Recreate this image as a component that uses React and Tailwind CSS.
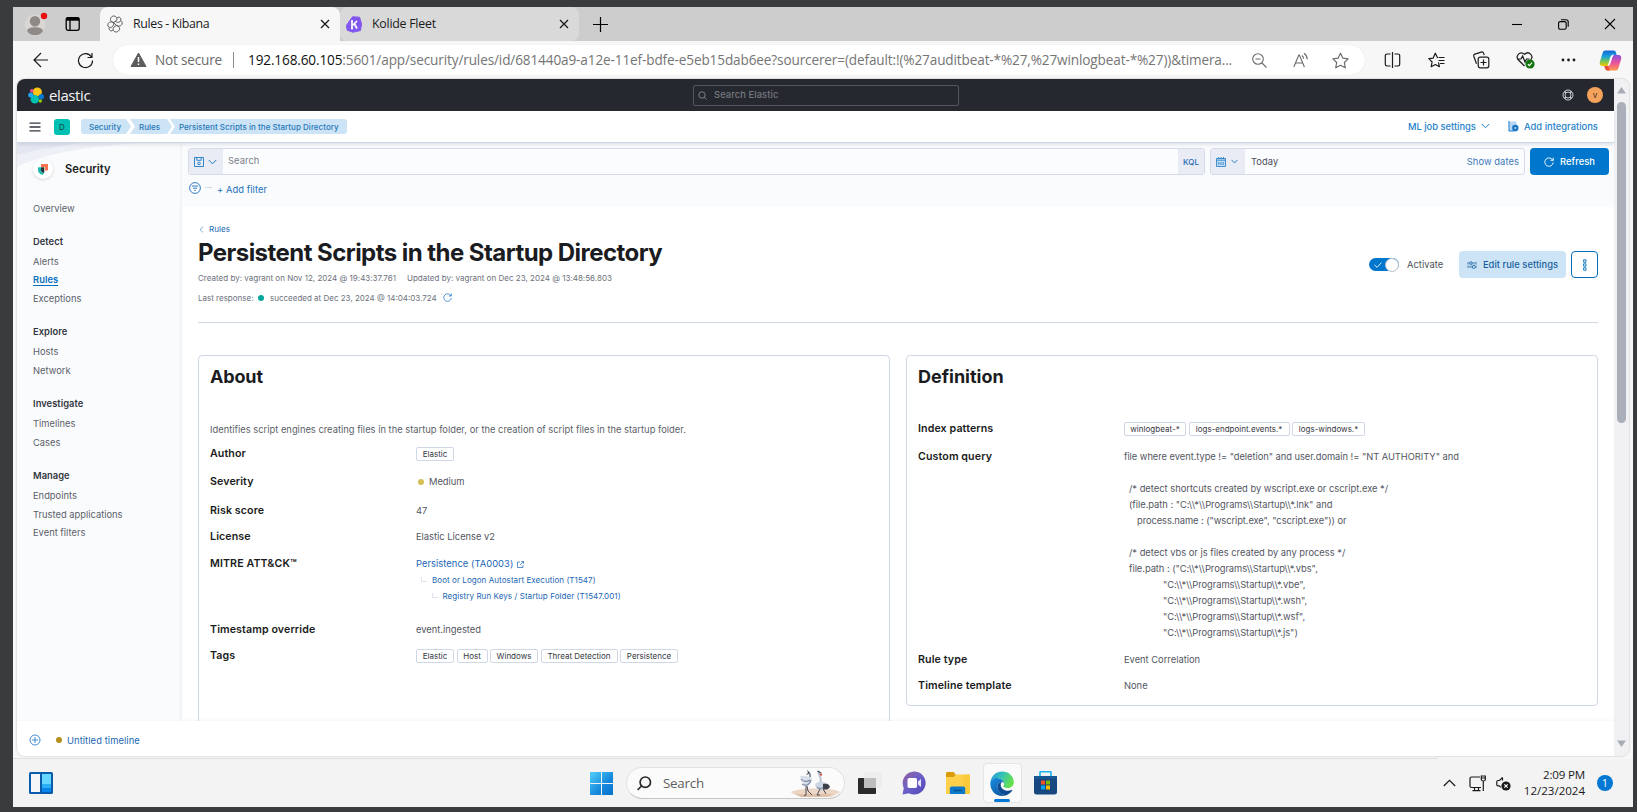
import React from "react";

const ui = "font-['Inter',sans-serif]";
const segoe = "font-['Open_Sans','Noto_Sans',sans-serif]";

function Svg({ w, h, vb, className = "", children, sw = 1 }) {
  return (
    <svg width={w} height={h} viewBox={vb || `0 0 ${w} ${h}`} fill="none" stroke="currentColor" strokeWidth={sw} className={"block shrink-0 " + className}>
      {children}
    </svg>
  );
}

/* ---------- browser chrome ---------- */

function CloseX() {
  return (
    <Svg w={10} h={10} sw={1.3} className="text-[#1a1a1a]">
      <path d="M1 1 9 9M9 1 1 9" />
    </Svg>
  );
}

function TabStrip() {
  return (
    <div className="flex h-[34px] shrink-0 bg-[#cdcdcd]">
      <div className="flex w-[87px] items-center pl-[11px]">
        <svg width="24" height="26" viewBox="0 0 24 26" className="block">
          <circle cx="11" cy="13.5" r="10.3" fill="#d9d6d3" />
          <circle cx="11" cy="10.2" r="5.2" fill="#8f8a87" />
          <path d="M3.200 20.200c0-3 3-4 7.800-4s7.800 1 7.800 4c-1.800 2.600-4.400 3.900-7.800 3.900s-6-1.300-7.800-3.900z" fill="#8f8a87" />
          <circle cx="20" cy="5" r="3.200" fill="#e81010" />
        </svg>
        <Svg w={16} h={16} sw={1.3} className="ml-[17px] text-black">
          <rect x="1.200" y="1.700" width="13" height="12.600" rx="2" />
          <path d="M1.200 3.200h13" strokeWidth="3" />
          <path d="M5 4v10" />
        </Svg>
      </div>
      <div className="flex w-[240px] items-center rounded-t-lg bg-[#f7f7f7] pl-[7px] pr-[10.5px]">
        <Svg w={16} h={18} vb="0 0 16 18" sw={1} className="text-[#555]">
          <path d="M6.300 7.500C3.500 6.500 2.800 4.500 4 2.600 5.500.3 9 .5 9.900 3.200 10.300 5 9 6.500 6.300 7.500z" />
          <path d="M9.900 3.200C11.500 1 14.300 2.500 13.800 5.200 13.300 7.300 10.500 8.200 8.600 6.300" />
          <path d="M6.300 7.500C4 6 .8 7.500.8 10c0 2.800 3.700 3.300 5 1.200C6.800 9.800 7 8.700 6.300 7.500z" />
          <path d="M9.700 10.500c2.800 1 3.500 3 2.300 4.900-1.500 2.300-5 2.100-5.900-.6-.4-1.800.9-3.300 3.600-4.300z" />
          <path d="M6.100 14.800c-1.600 2.200-4.400.7-3.900-2" />
          <path d="M9.700 10.500C12 12 15.200 10.500 15.200 8c0-1.200-.7-2-1.700-2.400M9.700 10.500 6.300 7.500" />
        </Svg>
        <span className="ml-[10px] flex-1 text-[12.4px] tracking-[-0.36px] text-[#1b1b1b]">Rules - Kibana</span>
        <CloseX />
      </div>
      <div className="flex w-[239px] items-center rounded-lg bg-[#d9d9d9] pl-[6px] pr-[10.5px]">
        <svg width="16" height="17" viewBox="0 0 16 17" className="block">
          <path d="M6.500 0.800 13.500 1.200 15.600 8 14.400 14.600 7 16.200 1.200 14.200 0.400 9.500z" fill="#8257ec" stroke="#8257ec" strokeLinejoin="round" />
          <path d="M6 5v7.600M5 5h2M5 12.500h2M11 5 7 9M8.500 8 11 12.500" stroke="#fff" strokeWidth="1.700" fill="none" />
        </svg>
        <span className="ml-[10px] flex-1 text-[12.4px] tracking-[-0.26px] text-[#1b1b1b]">Kolide Fleet</span>
        <CloseX />
      </div>
      <div className="flex flex-1 items-center pl-[14px]">
        <Svg w={15} h={15} sw={1.2} className="text-black">
          <path d="M7.500 0v15M0 7.500h15" />
        </Svg>
        <div className="ml-auto flex items-center text-black">
          <Svg w={10} h={10} sw={1.1}><path d="M0 5.500h10" /></Svg>
          <Svg w={11} h={11} sw={1.1} className="ml-9">
            <rect x="0.600" y="2.600" width="7.600" height="7.600" rx="1.500" />
            <path d="M3 .7h5c1.200 0 2.200.8 2.200 2v5" />
          </Svg>
          <Svg w={12} h={12} sw={1.1} className="ml-[35px] mr-[17px]"><path d="M1 1 11 11M11 1 1 11" /></Svg>
        </div>
      </div>
    </div>
  );
}

const star = "M8 1.200 10.200 5.700 15.200 6.400 11.600 9.900 12.500 14.900 8 12.500 3.500 14.900 4.400 9.900.8 6.400 5.800 5.700z";

function Toolbar() {
  return (
    <div className="flex h-[38px] shrink-0 items-center bg-[#f7f7f7] pl-5">
      <Svg w={16} h={16} sw={1.2} className="text-[#1b1b1b]"><path d="M15 8H1M8 1 1 8l7 7" /></Svg>
      <Svg w={17} h={17} sw={1.2} className="ml-7 text-[#1b1b1b]">
        <path d="M14.500 5A7 7 0 1 0 15.500 8.500M15 1v4.500h-4.500" />
      </Svg>
      <div className="ml-[19px] flex h-[30px] w-[1252px] items-center rounded-full bg-white pl-[17px] text-[#6b6b6b] shadow-[0_0_1px_rgba(0,0,0,0.15)]">
        <svg width="17" height="16" viewBox="0 0 17 16" className="block">
          <path d="M8.500 1 16 14.500H1z" fill="#5c5c5c" stroke="#5c5c5c" strokeLinejoin="round" />
          <path d="M8.500 5v5M8.500 11.500v1.600" stroke="#fff" strokeWidth="1.500" />
        </svg>
        <span className="ml-[8px] w-[66px] whitespace-nowrap text-[13.6px] tracking-[-0.2px]">Not secure</span>
        <div className="ml-[12px] h-4 w-px bg-[#8c8c8c]" />
        <span className="ml-[14px] w-[984px] whitespace-nowrap text-[13.6px] tracking-[-0.133px] text-[#757575]">
          <span className="text-[#111]">192.168.60.105</span>:5601/app/security/rules/id/681440a9-a12e-11ef-bdfe-e5eb15dab6ee?sourcerer=(default:!(%27auditbeat-*%27,%27winlogbeat-*%27))&amp;timera...
        </span>
        <Svg w={15} h={15} sw={1.1} className="ml-[20px]"><circle cx="6" cy="6" r="5.300" /><path d="M10 10l4.500 4.500M3.500 6h5" /></Svg>
        <Svg w={16} h={16} sw={1.1} className="ml-[26px]">
          <path d="M.8 15 5.800 3h.6l5 12M2.600 11h7" />
          <path d="M9 3.500c1 .8 1.500 2 1.500 3.300M11 1.200c2 1.400 3.200 3.500 3.200 6" />
        </Svg>
        <Svg w={17} h={17} vb="0 0 16 16" sw={1.1} className="ml-[23px]"><path d={star} strokeLinejoin="round" /></Svg>
      </div>
      <div className="flex items-center pl-[19px] text-[#1b1b1b]">
        <Svg w={17} h={16} sw={1.2}><path d="M6.500 2H3a1.700 1.700 0 0 0-1.700 1.700v8.600A1.700 1.700 0 0 0 3 14h3.500M10.500 2H14a1.700 1.700 0 0 1 1.700 1.700v8.600A1.700 1.700 0 0 1 14 14h-3.500M8.500 0v16" /></Svg>
        <Svg w={17} h={16} sw={1.2} className="ml-[27px]">
          <path d="M10.500 10.300l.9 4.400-4-2.200-4.200 2.200.9-4.700L.8 6.700l4.400-.6L7.300 1.200 9.700 6" strokeLinejoin="round" />
          <path d="M10.500 5.500h6M10.500 8.500h6M12 11.500h4.500" />
        </Svg>
        <Svg w={18} h={18} sw={1.2} className="ml-[27px]">
          <rect x="6.200" y="6.200" width="10.600" height="10.600" rx="2" />
          <path d="M11.500 8.500v6M8.500 11.500h6M4.500 12.800 1.800 5.200c-.3-1 .2-1.800 1-2.100l6.500-2c1-.3 1.900.1 2.200 1l.8 2" />
        </Svg>
        <svg width="19" height="18" viewBox="0 0 19 18" fill="none" className="ml-[26px] block">
          <path d="M8.500 15 2.200 8.800C-.8 5 4 -.8 8.500 3.300 13 -.8 18 5 14.800 8.800M1 8h4l1.600-3 2.400 6 1.500-3h3" stroke="#1b1b1b" strokeWidth="1.200" />
          <circle cx="14" cy="13" r="4.600" fill="#13740e" />
          <path d="M11.800 13.200l1.500 1.500 2.800-3" stroke="#fff" strokeWidth="1.100" />
        </svg>
        <svg width="15" height="4" viewBox="0 0 15 4" className="ml-[26px] block" fill="#1b1b1b"><circle cx="2" cy="2" r="1.400" /><circle cx="7.500" cy="2" r="1.400" /><circle cx="13" cy="2" r="1.400" /></svg>
        <svg width="23" height="21" viewBox="0 0 23 21" className="ml-[23px] block">
          <defs>
            <linearGradient id="cpA" x1="0" y1="0" x2="0" y2="1"><stop offset="0" stopColor="#1566d6" /><stop offset=".4" stopColor="#19a5d8" /><stop offset=".7" stopColor="#7bc553" /><stop offset="1" stopColor="#f5c700" /></linearGradient>
            <linearGradient id="cpB" x1="0" y1="0" x2="0" y2="1"><stop offset="0" stopColor="#8b50e0" /><stop offset=".5" stopColor="#e9529c" /><stop offset="1" stopColor="#ff9a4a" /></linearGradient>
          </defs>
          <path d="M6.500.5h8c1.500 0 2 .8 2.500 2l.7 2.500h-3c-1.500 0-2.200 1-2.700 2.500L10 14c-.5 1.500-1.200 2-2.800 2H3.500C1 16 .3 13.800 1 11.500L3.600 3C4 1.300 5 .5 6.500.5z" fill="url(#cpA)" />
          <path d="M16.500 20.500h-8c-1.500 0-2-.8-2.500-2L5.300 16h3c1.500 0 2.200-1 2.700-2.500L13 7c.5-1.500 1.200-2 2.800-2h3.700c2.500 0 3.200 2.200 2.500 4.500L19.400 18c-.4 1.700-1.400 2.500-2.900 2.500z" fill="url(#cpB)" />
          <path d="M9.200 15.500c1-.3 1.500-1.200 1.800-2.300L13 7c.3-1 .6-1.600 1.300-1.900-1.600 0-2.200 1-2.600 2.400L9.900 13.800z" fill="#fff" stroke="#fff" strokeWidth="1" />
          <path d="M6 17.800 5.300 16h4l1.500 4.500H8.500c-1.500 0-2-1.200-2.500-2.700z" fill="#ee4a3c" />
        </svg>
      </div>
    </div>
  );
}

/* ---------- kibana header ---------- */

function ElasticHeader() {
  return (
    <div className="flex h-8 shrink-0 items-center bg-[#25282f]">
      <svg width="16" height="17" viewBox="0 0 16 17" className="ml-[11px] block">
        <circle cx="9.300" cy="5" r="4.600" fill="#fec514" />
        <circle cx="6.800" cy="12.300" r="4.300" fill="#00bfb3" />
        <circle cx="13.300" cy="9.800" r="2.700" fill="#0077cc" />
        <circle cx="2.700" cy="8" r="2.500" fill="#1ba9f5" />
        <circle cx="3.800" cy="3.700" r="1.800" fill="#f04e98" />
        <circle cx="12.300" cy="14" r="1.700" fill="#93c90e" />
      </svg>
      <span className="ml-[5px] mt-[-1px] w-[44px] font-['Open_Sans',sans-serif] text-[15px] font-normal leading-5 tracking-[-0.4px] text-[#f4f5f7]">elastic</span>
      <div className="ml-[600px] flex h-[21px] w-[266px] items-center rounded-[2px] border border-[#55585e] pl-1 text-[#868a91]">
        <Svg w={9} h={9} sw={0.9}><circle cx="4" cy="4" r="3.200" /><path d="M6.300 6.300 8.600 8.600" /></Svg>
        <span className="ml-[7px] text-[9.33px] font-medium tracking-[0.1px] text-[#75787f]">Search Elastic</span>
      </div>
      <Svg w={12} h={12} sw={1} className="ml-[603px] text-[#c9ccd3]">
        <circle cx="6" cy="6" r="5" /><circle cx="6" cy="6" r="3" />
        <path d="M2.500 2.500 4 4M9.500 2.500 8 4M2.500 9.500 4 8M9.500 9.500 8 8" strokeWidth="1.600" />
      </Svg>
      <div className="ml-[13px] flex h-4 w-4 items-center justify-center rounded-full bg-[#f5a35c] text-[8px] text-[#3a2c20]">v</div>
    </div>
  );
}

function Crumb({ children, first, last, w }) {
  const clip = first
    ? "[clip-path:polygon(0_0,calc(100%-5px)_0,100%_50%,calc(100%-5px)_100%,0_100%)] rounded-l-[3px]"
    : last
    ? "[clip-path:polygon(0_0,100%_0,100%_100%,0_100%,5px_50%)] rounded-r-[3px]"
    : "[clip-path:polygon(0_0,calc(100%-5px)_0,100%_50%,calc(100%-5px)_100%,0_100%,5px_50%)]";
  return <div className={`flex h-[15px] items-center whitespace-nowrap bg-[#cce4f5] text-[8px] font-medium text-[#2877b8] ${w} ${clip}`}>{children}</div>;
}

function SubHeader() {
  return (
    <div className="relative z-10 flex h-8 shrink-0 items-center border-b border-[#cfd6e3] bg-white shadow-[0_2px_3px_rgba(110,125,155,0.18)]">
      <Svg w={12} h={10} sw={1.3} className="ml-3 text-[#343741]"><path d="M.5 1.200h11M.5 5h11M.5 8.800h11" /></Svg>
      <div className="ml-[13px] flex h-4 w-4 items-center justify-center rounded-[3px] bg-[#00bfb3] text-[8px] text-[#12443f]">D</div>
      <div className="ml-[11px] flex">
        <Crumb first w="w-[50px] pl-[8px]">Security</Crumb>
        <Crumb w="-ml-px w-[42px] pl-[9px]">Rules</Crumb>
        <Crumb last w="-ml-[2px] w-[177px] pl-[9px] tracking-[0.025px]">Persistent Scripts in the Startup Directory</Crumb>
      </div>
      <div className="ml-auto flex items-center pr-4 text-[9.33px] font-medium text-[#2581ca]">
        <span className="w-[67px] whitespace-nowrap pt-px">ML job settings</span>
        <Svg w={9} h={6} sw={1} className="ml-[6px]"><path d="M.8 1 4.500 4.800 8.200 1" /></Svg>
        <svg width="11" height="11" viewBox="0 0 11 11" className="ml-[18px] block">
          <rect x="0.500" y="0.500" width="8" height="10" fill="#b7d7f0" />
          <path d="M1 0v10h5" stroke="#2f86cf" fill="none" />
          <circle cx="7.300" cy="7" r="3.200" fill="#1a76c4" /><circle cx="7.300" cy="7" r="1" fill="#b7d7f0" />
        </svg>
        <span className="ml-[5px] w-[74px] whitespace-nowrap pt-px tracking-[0.02px]">Add integrations</span>
      </div>
    </div>
  );
}

/* ---------- sidebar ---------- */

const groups = [
  { title: "Detect", items: ["Alerts", "Rules", "Exceptions"] },
  { title: "Explore", items: ["Hosts", "Network"] },
  { title: "Investigate", items: ["Timelines", "Cases"] },
  { title: "Manage", items: ["Endpoints", "Trusted applications", "Event filters"] },
];

function Sidebar() {
  return (
    <div className="relative w-[165px] shrink-0 bg-[#fafbfd] pl-4 text-[9.33px] text-[#5b5f69] shadow-[inset_-2px_0_2px_rgba(0,0,0,0.035)]">
      <svg width="120" height="26" viewBox="0 0 120 26" className="absolute left-0 top-0">
        <path d="M0 0h120C80 3 30 9 0 24z" fill="#eef0f7" />
        <path d="M0 0h62C40 4 18 7 0 12z" fill="#e4e7f1" />
      </svg>
      <div className="relative flex h-[52px] items-center">
        <div className="flex h-5 w-5 items-center justify-center rounded-full bg-white shadow-[0_1px_3px_rgba(0,0,0,0.15)]">
          <svg width="10" height="11" viewBox="0 0 10 11" className="block">
            <path d="M3 0h7v6.500H7V3H3z" fill="#fa744e" />
            <path d="M0 3.200h3v4.500L6 9.500 4.500 11C1 9.600 0 8 0 6z" fill="#1dbab0" />
            <path d="M3 3.200h3.300V8.500L5.500 9C4 8.500 3 7.500 3 6.500z" fill="#263238" />
          </svg>
        </div>
        <span className="ml-3 mt-px text-[11.2px] font-semibold text-[#1a1c21]">Security</span>
      </div>
      <div className="flex h-[25px] items-center pt-[2px]">Overview</div>
      <div className="mt-3 flex flex-col gap-[14.4px]">
        {groups.map((g) => (
          <div key={g.title}>
            <div className="flex h-5 items-center font-semibold tracking-[0.05px] text-[#343741]">{g.title}</div>
            {g.items.map((i) => (
              <div key={i} className={i === "Rules" ? "flex h-[18.7px] items-center font-semibold tracking-[0.05px] text-[#0b6fc0] underline underline-offset-[1.5px]" : "flex h-[18.7px] items-center pt-px tracking-[0.01px]"}>{i}</div>
            ))}
          </div>
        ))}
      </div>
    </div>
  );
}

/* ---------- main ---------- */

function Chev() {
  return <Svg w={9} h={6} sw={1}><path d="M.8 1 4.500 4.800 8.200 1" /></Svg>;
}

function Reload({ s = 10 }) {
  return <Svg w={s} h={s} vb="0 0 10 10" sw={0.9}><path d="M8.900 3.500A4.200 4.200 0 1 0 9.200 5.400M6.500 3.300h2.800V.6" /></Svg>;
}

function QueryBar() {
  return (
    <div className="h-16 shrink-0 bg-[#fafbfd] pl-[6px] pr-[5px] pt-[5px]">
      <div className="flex h-[27px] text-[9.33px]">
        <div className="flex w-[1017px] rounded-[3px] border border-[#d3dae9] bg-[#fbfcfe]">
          <div className="flex w-[34px] items-center gap-1 bg-[#e9ecf4] pl-[5px] text-[#1f7ac6]">
            <Svg w={10} h={10} sw={0.9}><path d="M.5.500h9v9h-9zM2.800.500v2.800h4.400V.500" /><circle cx="5" cy="6.400" r="1.300" /></Svg>
            <Chev />
          </div>
          <span className="flex-1 pl-[5px] leading-[24px] tracking-[0.08px] text-[#7b7f89]">Search</span>
          <div className="flex w-[26px] items-center justify-center bg-[#e9ecf4] text-[8px] font-medium text-[#1f6ab5]">KQL</div>
        </div>
        <div className="ml-[5px] flex w-[315px] rounded-[3px] border border-[#d3dae9] bg-[#fbfcfe]">
          <div className="flex w-[34px] items-center gap-[5px] bg-[#e9ecf4] pl-[5px] text-[#1f7ac6]">
            <Svg w={10} h={10} sw={0.8}><path d="M.5 1.500h9v8h-9z" fill="#c3ddf2" /><path d="M.5 3.200h9M2.500 0v2M5 0v2M7.500 0v2M2.800 5v3M5 5v3M7.200 5v3" /></Svg>
            <Svg w={7} h={5} sw={0.9}><path d="M.5.800 3.500 4 6.500.800" /></Svg>
          </div>
          <span className="flex-1 pl-[6px] leading-[26px] text-[#4c4f58] tracking-[0.08px]">Today</span>
          <span className="pr-[5px] leading-[26px] text-[#3d78b8] tracking-[0.08px]">Show dates</span>
        </div>
        <div className="ml-[5px] flex flex-1 items-center justify-center gap-[6px] rounded-[4px] bg-[#0077cc] text-white">
          <Reload s={10} />
          <span className="font-medium tracking-[0.1px]">Refresh</span>
        </div>
      </div>
      <div className="flex h-[27px] items-center text-[#2070bb]">
        <Svg w={12} h={12} sw={0.9} className="mt-[-1px] ml-[1px]"><circle cx="6" cy="6" r="5.400" /><path d="M2.800 4h6.400M4 6.200h4M5.200 8.300h1.600" /></Svg>
        <div className="mb-[2px] ml-[4px] h-px w-[7px] bg-[#d3dae6]" />
        <span className="ml-[5px] mt-[3px] text-[9.33px] tracking-[0.07px]">+ Add filter</span>
      </div>
    </div>
  );
}

function RuleHeader() {
  return (
    <div className="flex h-[116px] justify-between border-b border-[#cfd6e4]">
      <div>
        <div className="mt-[15px] flex h-[14px] items-center text-[8px] text-[#1a66b3]">
          <Svg w={5} h={7} sw={0.9} className="ml-[1px] text-[#6aa5d8]"><path d="M4 .6 1 3.500 4 6.400" /></Svg>
          <span className="ml-[5px] tracking-[0.06px]">Rules</span>
        </div>
        <h1 className="mt-px h-[31px] whitespace-nowrap text-[24px] font-bold leading-8 tracking-[-0.55px] text-[#1a1c21]">Persistent Scripts in the Startup Directory</h1>
        <div className="mt-px flex h-[18px] items-center gap-[11px] whitespace-nowrap text-[8px] tracking-[0.015px] text-[#6d717c]">
          <span>Created by: vagrant on Nov 12, 2024 @ 19:43:37.761</span>
          <span>Updated by: vagrant on Dec 23, 2024 @ 13:48:56.803</span>
        </div>
        <div className="mt-[1px] flex h-5 items-center whitespace-nowrap text-[8px] text-[#6d717c]">
          <span>Last response:</span>
          <div className="mb-px ml-[5px] h-[6px] w-[6px] rounded-full bg-[#00a69b]" />
          <span className="ml-[5.5px]">succeeded at Dec 23, 2024 @ 14:04:03.724</span>
          <div className="mb-[2px] ml-[6px] text-[#2b82cc]"><Reload s={9} /></div>
        </div>
      </div>
      <div className="mt-[44px] flex h-[27px] items-center text-[9.33px]">
        <div className="flex h-[13px] w-[30px] items-center justify-between rounded-full bg-[#0077cc] pl-[5px] text-white">
          <Svg w={8} h={6} sw={0.9}><path d="M.5 3 3 5.300 7.500.600" /></Svg>
          <div className="h-[14px] w-[14px] rounded-full border border-[#bcc3cf] bg-white" />
        </div>
        <span className="ml-2 w-[36px] text-[#4c4f58] tracking-[0.05px]">Activate</span>
        <div className="ml-4 flex h-full w-[107px] items-center justify-center gap-[6px] rounded-[4px] bg-[#cce4f5] text-[#1a5f9f]">
          <Svg w={10} h={8} sw={0.8}><path d="M0 2h2.500M5.500 2H10M0 6h5M8.500 6H10" /><circle cx="4" cy="2" r="1.300" /><circle cx="6.800" cy="6" r="1.500" /><path d="M0 4h10" strokeWidth=".4" /></Svg>
          <span className="whitespace-nowrap font-medium tracking-[0.05px]">Edit rule settings</span>
        </div>
        <div className="ml-[5px] flex h-full w-[27px] items-center justify-center rounded-[4px] border border-[#0071c2] bg-white text-[#0071c2]">
          <Svg w={4} h={12} sw={0.9}><path d="M.6.800h2.400v2.400H.6zM.6 4.800h2.400v2.400H.6zM.6 8.800h2.400v2.400H.6z" /></Svg>
        </div>
      </div>
    </div>
  );
}

function Badge({ children, w }) {
  return <span className={`flex h-[14px] items-center justify-center whitespace-nowrap rounded-[2px] border border-[#d0d7e6] bg-white text-[8px] text-[#343741] ${w}`}>{children}</span>;
}

function Row({ h, label, children }) {
  return (
    <div className={`flex items-center ${h}`}>
      <div className="w-[206px] whitespace-nowrap text-[10.67px] font-semibold tracking-[0.1px] text-[#1a1c21]">{label}</div>
      <div className="flex items-center text-[9.33px] text-[#53565f]">{children}</div>
    </div>
  );
}

function TopRow({ h, label, children }) {
  return (
    <div className={`flex items-start ${h}`}>
      <div className="w-[206px] whitespace-nowrap text-[10.67px] font-semibold leading-4 tracking-[0.1px] text-[#1a1c21]">{label}</div>
      <div className="whitespace-pre text-[9.33px] leading-4 text-[#53565f]">{children}</div>
    </div>
  );
}

function Elbow({ className }) {
  return <div className={`mb-[2px] h-[5px] w-[6px] border-b border-l border-[#dde2ec] ${className}`} />;
}

const query = [
  ["tracking-[-0.045px]", 'file where event.type != "deletion" and user.domain != "NT AUTHORITY" and'],
  ["", " "],
  ["pl-[5px]", "/* detect shortcuts created by wscript.exe or cscript.exe */"],
  ["pl-[5px] tracking-[-0.03px]", '(file.path : "C:\\\\*\\\\Programs\\\\Startup\\\\*.lnk" and'],
  ["pl-[13px] tracking-[-0.075px]", 'process.name : ("wscript.exe", "cscript.exe")) or'],
  ["", " "],
  ["pl-[5px]", "/* detect vbs or js files created by any process */"],
  ["pl-[5px] tracking-[-0.04px]", 'file.path : ("C:\\\\*\\\\Programs\\\\Startup\\\\*.vbs",'],
  ["pl-[39px] tracking-[-0.05px]", '"C:\\\\*\\\\Programs\\\\Startup\\\\*.vbe",'],
  ["pl-[39px] tracking-[-0.05px]", '"C:\\\\*\\\\Programs\\\\Startup\\\\*.wsh",'],
  ["pl-[39px] tracking-[-0.05px]", '"C:\\\\*\\\\Programs\\\\Startup\\\\*.wsf",'],
  ["pl-[39px] tracking-[-0.05px]", '"C:\\\\*\\\\Programs\\\\Startup\\\\*.js")'],
];

function About() {
  return (
    <div className="h-[380px] w-[692px] rounded-[4px] border border-[#d0d7e6] pl-[11px]">
      <h2 className="h-[61px] pt-[9px] text-[18px] font-bold leading-6 tracking-[-0.15px] text-[#1a1c21]">About</h2>
      <div className="flex h-6 items-center whitespace-nowrap pt-px text-[9.33px] tracking-[0.01px] text-[#5b5f69]">Identifies script engines creating files in the startup folder, or the creation of script files in the startup folder.</div>
      <Row h="h-[26px]" label="Author"><Badge w="w-[38px]">Elastic</Badge></Row>
      <Row h="h-[29.6px]" label="Severity"><div className="ml-[2px] mr-[5px] h-[6px] w-[6px] rounded-full bg-[#d6bf57]" />Medium</Row>
      <Row h="h-[28px]" label="Risk score">47</Row>
      <Row h="h-[25px]" label="License">Elastic License v2</Row>
      <TopRow h="h-[67.4px] pt-[6.6px]" label="MITRE ATT&amp;CK™">
        <div className="flex h-4 items-center gap-1 tracking-[0.06px] text-[#1a66b3]">
          <span>Persistence (TA0003)</span>
          <Svg w={7} h={7} sw={0.7}><path d="M3 1H.5v5.500H6V4M4.200.500h2.300v2.300M6.500.500 3 4" /></Svg>
        </div>
        <div className="flex h-4 items-center text-[8px] tracking-[0.07px] text-[#1a66b3]"><Elbow className="ml-[5px] mr-[5px]" />Boot or Logon Autostart Execution (T1547)</div>
        <div className="flex h-4 items-center text-[8px] tracking-[0.07px] text-[#1a66b3]"><Elbow className="ml-[15.5px] mr-[5px]" />Registry Run Keys / Startup Folder (T1547.001)</div>
      </TopRow>
      <Row h="h-[27px]" label="Timestamp override">event.ingested</Row>
      <Row h="h-[25px]" label="Tags">
        <div className="flex gap-[2.5px]">
          <Badge w="w-[38px]">Elastic</Badge>
          <Badge w="w-[31px]">Host</Badge>
          <Badge w="w-[48px]">Windows</Badge>
          <Badge w="w-[77px]">Threat Detection</Badge>
          <Badge w="w-[58px]">Persistence</Badge>
        </div>
      </Row>
    </div>
  );
}

function Definition() {
  return (
    <div className="h-[351px] w-[692px] rounded-[4px] border border-[#d0d7e6] pl-[11px]">
      <h2 className="h-[60.4px] pt-[9px] text-[18px] font-bold leading-6 tracking-[0px] text-[#1a1c21]">Definition</h2>
      <Row h="h-[26px]" label="Index patterns">
        <div className="flex gap-[2.5px]">
          <Badge w="w-[62px] tracking-[0.04px]">winlogbeat-*</Badge>
          <Badge w="w-[101px]">logs-endpoint.events.*</Badge>
          <Badge w="w-[73px]">logs-windows.*</Badge>
        </div>
      </Row>
      <TopRow h="h-[204px] pt-[6.8px]" label="Custom query">
        {query.map(([pad, line], i) => (
          <div key={i} className={pad}>{line}</div>
        ))}
      </TopRow>
      <Row h="h-[27px]" label="Rule type">Event Correlation</Row>
      <Row h="h-[25px]" label="Timeline template">None</Row>
    </div>
  );
}

function Kibana() {
  return (
    <div className={`flex min-w-0 flex-1 flex-col ${ui}`}>
      <ElasticHeader />
      <SubHeader />
      <div className="flex h-[578px] shrink-0 overflow-hidden">
        <Sidebar />
        <div className="flex min-w-0 flex-1 flex-col bg-white">
          <QueryBar />
          <div className="px-4">
            <RuleHeader />
            <div className="mt-8 flex items-start justify-between">
              <About />
              <Definition />
            </div>
          </div>
        </div>
      </div>
      <div className="flex flex-1 items-center bg-white pl-3 pt-[3px] text-[9.33px] text-[#1a66b3] shadow-[0_-1px_3px_rgba(0,0,0,0.04)]">
        <Svg w={12} h={12} sw={0.9} className="text-[#2b82cc]"><circle cx="6" cy="6" r="5" /><path d="M6 3v6M3 6h6" /></Svg>
        <div className="ml-[15px] h-[6px] w-[6px] rounded-full bg-[#b5901c]" />
        <span className="ml-[5px] pt-px tracking-[0.09px]">Untitled timeline</span>
      </div>
    </div>
  );
}

function Scrollbar() {
  return (
    <div className="flex w-[15px] shrink-0 flex-col items-center bg-[#f1f1f4] pt-[8px]">
      <svg width="9" height="7" viewBox="0 0 9 7"><path d="M4.500 0 9 6.500H0z" fill="#a9adb6" /></svg>
      <div className="mt-2 h-[321px] w-[9px] rounded-full bg-[#abafb9]" />
      <svg width="9" height="7" viewBox="0 0 9 7" className="mb-[9px] mt-auto"><path d="M4.500 7 9 .5H0z" fill="#a9adb6" /></svg>
    </div>
  );
}

/* ---------- taskbar ---------- */

function Cranes() {
  return (
    <svg width="49" height="27" viewBox="0 0 49 27" className="block">
      <path d="M0 22c6-4 40-5 49 0l-5 3-4 2H10c-3-2-8-2-10-5z" fill="#ecd6c6" />
      <path d="M4 24h38l-6 3H10z" fill="#dfc1aa" />
      <path d="M17 2c2.500 1.500 3 5 1 8" stroke="#7b8492" strokeWidth="1.700" fill="none" />
      <path d="M16.500 0.500 18 3l-2.500 1.500" stroke="#3f434b" strokeWidth="1" fill="none" />
      <path d="M9 6.500c4-1 7 0 11 .5 2 4-1 9-5 9-2-1-5-5-6-9.500z" fill="#d9e0ea" />
      <path d="M10 9c2 3 6 3 9 1M11 14c3 2 7 2 9-4" stroke="#7f8ea5" strokeWidth="1.200" fill="none" />
      <path d="M15 16v9l-2 1M16 16l1 5 4 4" stroke="#4a4a50" fill="none" />
      <path d="M28 1c-2 3 4 6 1 13" stroke="#bcc5d3" strokeWidth="2.200" fill="none" />
      <path d="M29.500 3.500l1 2" stroke="#d7493a" strokeWidth="1.800" />
      <path d="M26.500 1l3.500 2" stroke="#3f434b" strokeWidth="1.300" />
      <path d="M24 14c3-3 9-3 13 0l-3 6c-6 1-9-1-10-6z" fill="#ccd5e3" />
      <path d="M26 17c2 2 6 2 8-1" stroke="#8291a8" strokeWidth="1.100" fill="none" />
      <path d="M32 14c4-1 6 0 7 3-2 3-5 3-7 2z" fill="#3d4048" />
      <path d="M29 19l-3 6h3M32 19l3 5" stroke="#4a4a50" fill="none" />
    </svg>
  );
}

function Taskbar() {
  return (
    <div className={`flex h-12 shrink-0 items-center bg-[#f3f3f3] ${segoe}`}>
      <svg width="24" height="22" viewBox="0 0 24 22" className="ml-4 block">
        <rect width="24" height="22" rx="1.500" fill="#0b5cab" />
        <rect x="2" y="2" width="9" height="18" fill="#f4f6f8" />
        <rect x="13" y="2" width="9" height="10" fill="#66d8ff" />
        <rect x="13" y="12" width="9" height="4" fill="#2bb0f7" />
        <rect x="13" y="16" width="9" height="4" fill="#0a84e8" />
      </svg>
      <svg width="23" height="23" viewBox="0 0 23 23" className="ml-[537px] block">
        <defs><linearGradient id="win" x1="0" y1="0" x2="1" y2="1"><stop offset="0" stopColor="#52d0fb" /><stop offset=".6" stopColor="#1587dc" /><stop offset="1" stopColor="#0873cf" /></linearGradient></defs>
        <path d="M0 0h11v11H0zM12 0h11v11H12zM0 12h11v11H0zM12 12h11v11H12z" fill="url(#win)" />
      </svg>
      <div className="ml-[13px] flex h-8 w-[219px] items-center rounded-full border border-[#e2e2e2] border-b-[#c6c6c6] bg-[#fbfbfb] pl-[10px] pr-[4px]">
        <Svg w={15} h={15} sw={1.7} className="text-[#2a2a2a]"><circle cx="8.300" cy="6.200" r="5.200" /><path d="M4.500 10 .6 14" /></Svg>
        <span className="ml-[11px] flex-1 text-[13.4px] tracking-[-0.25px] text-[#5f5f5f]">Search</span>
        <Cranes />
      </div>
      <svg width="24" height="22" viewBox="0 0 24 22" className="ml-[12.5px] block">
        <rect x="0" y="6" width="18" height="16" rx="1" fill="#2a2a2a" />
        <rect x="6" y="0" width="18" height="16" rx="1" fill="#ededed" />
        <rect x="6" y="6" width="12" height="10" fill="#bdbdbd" />
      </svg>
      <svg width="24" height="24" viewBox="0 0 24 24" className="ml-5 block">
        <defs><linearGradient id="chat" x1="0" y1="0" x2="1" y2="1"><stop offset="0" stopColor="#96629f" /><stop offset=".5" stopColor="#6a5fc8" /><stop offset="1" stopColor="#5145b5" /></linearGradient></defs>
        <path d="M12 .5A11.500 11.500 0 1 1 7 22.300L.5 23.500 1.800 17A11.500 11.500 0 0 1 12 .5z" fill="url(#chat)" />
        <rect x="5.500" y="7" width="9.500" height="10" rx="1.800" fill="#fff" />
        <path d="M16 10.500l3-2.500v8l-3-2.500z" fill="#e8e6fb" />
      </svg>
      <svg width="24" height="22" viewBox="0 0 25 22" preserveAspectRatio="none" className="ml-5 block">
        <path d="M0 1.500C0 .7.600 0 1.500 0H8l2 2.500v4H0z" fill="#dc9b08" />
        <path d="M0 5h8l2-2.500h15V22H0z" fill="#fcd04a" />
        <path d="M18 2.500h7V22h-7z" fill="#f9c22d" opacity=".5" />
        <path d="M4 22v-5.500C4 15.300 5 14.500 6 14.500h12c1.200 0 2 .8 2 2V22z" fill="#0c79c9" />
        <path d="M8 18.500h8" stroke="#0a4f8c" strokeWidth="1.500" />
      </svg>
      <div className="relative ml-[13px] flex h-[40px] w-[39px] items-center justify-center rounded-[4px] border border-[#e5e5e5] bg-[#fafafa]">
        <svg width="24" height="25" viewBox="0 0 24 25" className="block">
          <defs>
            <linearGradient id="edA" x1="0" y1="0" x2="1" y2=".4"><stop offset="0" stopColor="#2397d6" /><stop offset=".5" stopColor="#35c1b8" /><stop offset="1" stopColor="#64e04f" /></linearGradient>
            <linearGradient id="edB" x1="0" y1="0" x2=".6" y2="1"><stop offset="0" stopColor="#1a8fe0" /><stop offset="1" stopColor="#0b59a4" /></linearGradient>
          </defs>
          <path d="M.5 10.500C1.500 4.500 6.500.5 12 .5c7 0 11.800 5 11.800 10.500 0 4-3 6-6.300 6-3 0-4.500-1.200-4.300-2 .8-.8 1-1.600 1-2.500C14 9.500 10 7 6.500 7 3.500 7 1.500 8.500.5 10.500z" fill="url(#edA)" />
          <path d="M.3 12.500C.300 9 3 7 6.300 7c4 0 7.700 2.500 7.900 5.500-.2-.8-1.200-1.500-2.700-1.500-2.500 0-4 2-4 4.500 0 4 3.500 8.800 9 8.800-1.500.5-3 .7-4.500.700C5.500 25 .300 19.500.300 12.500z" fill="url(#edB)" />
          <path d="M7.500 15.500C7.500 20 11 24.300 16.500 24.300c2.500-1 4.300-2.500 5.700-4.700.3-.6-.1-1-.7-.7-1 .5-2.300.8-3.600.8-4.300 0-7-2.700-7.200-5.500-.1-1.500.5-2.700 1.200-3.200-2.800-.200-4.400 1.800-4.400 4.500z" fill="#0d4a92" />
        </svg>
        <div className="absolute bottom-0 left-[10.500px] h-[3px] w-4 rounded-full bg-[#0078d4]" />
      </div>
      <svg width="23" height="24" viewBox="0 0 23 24" className="ml-[12.5px] block">
        <path d="M6 6V1.500C6 .900 6.400.700 7 .700h9c.6 0 1 .2 1 .8V6" stroke="#1fb5ee" strokeWidth="1.700" fill="none" />
        <path d="M0 5h23v16c0 1.700-1 2.500-2.500 2.500h-18C1 23.500 0 22.700 0 21z" fill="#17477f" />
        <path d="M0 5h23v3H0z" fill="#135f9f" opacity=".6" />
        <path d="M7 9.500h4v4H7z" fill="#f25022" /><path d="M12 9.500h4v4h-4z" fill="#7fba00" /><path d="M7 14.500h4v4H7z" fill="#00a4ef" /><path d="M12 14.500h4v4h-4z" fill="#ffb900" />
      </svg>
      <div className="ml-auto flex items-center text-[#1b1b1b]">
        <Svg w={13} h={8} sw={1.3}><path d="M.8 7 6.500 1.300 12.200 7" /></Svg>
        <Svg w={17} h={17} sw={1.2} className="ml-[13px]">
          <path d="M11 2H2.500C1.600 2 1 2.600 1 3.500v7.500c0 .9.600 1.500 1.500 1.500H12M5.500 12.500v3M9.500 12.500v3M3.500 15.700h8M12.300 1h4v3.500c0 1-.8 1.500-2 1.500s-2-.5-2-1.500zM14.300 6v10M12.500 3h3.500" />
        </Svg>
        <svg width="15" height="15" viewBox="0 0 15 15" fill="none" className="ml-[10px] block">
          <path d="M6.500 1.500v3M6.500 1.500 3.500 4.500H2C1.300 4.500.800 5 .800 5.700v3c0 .7.500 1.200 1.200 1.200h1.300l1.500 1.500" stroke="#1b1b1b" strokeWidth="1.200" />
          <circle cx="10" cy="10" r="4.600" fill="#1b1b1b" />
          <path d="M8.300 8.300l3.400 3.400M11.700 8.300l-3.400 3.400" stroke="#fff" strokeWidth="1.100" />
        </svg>
        <div className="ml-[11px] w-[63px] whitespace-nowrap text-right text-[11.6px] leading-4 tracking-[-0.04px]">
          <div className="tracking-[-0.2px]">2:09 PM</div>
          <div>12/23/2024</div>
        </div>
        <div className="ml-3 mr-5 flex h-4 w-4 items-center justify-center rounded-full bg-[#0078d4] text-[11px] text-white">1</div>
      </div>
    </div>
  );
}

export default function App() {
  return (
    <div className="h-[812px] w-[1637px] overflow-hidden bg-[#3a3b3d] pl-[13px] pr-1 pt-[7px]">
      <div className="flex h-[800px] flex-col bg-[#f7f7f7]">
        <div className={segoe}>
          <TabStrip />
          <Toolbar />
        </div>
        <div className="mx-1 flex h-[677px] shrink-0 overflow-hidden rounded-lg shadow-[0_0_2px_rgba(0,0,0,0.3)]">
          <Kibana />
          <Scrollbar />
        </div>
        <div className="mt-[2px] h-px w-[1425px] shrink-0 bg-[#e0e0e0]" />
        <Taskbar />
      </div>
    </div>
  );
}
